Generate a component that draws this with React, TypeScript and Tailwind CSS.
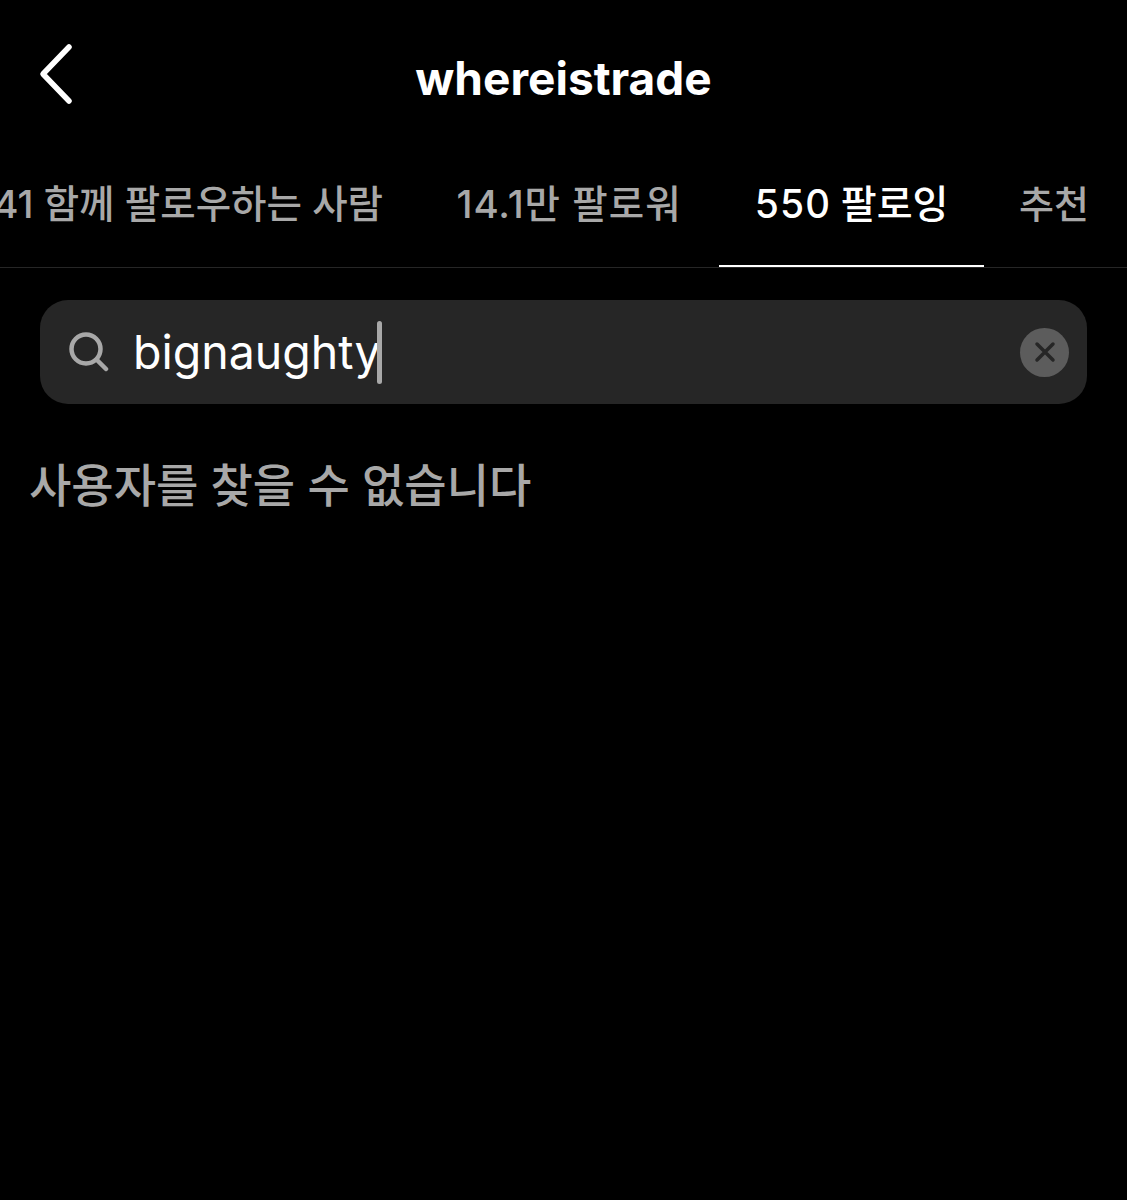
const FONT = "font-['Inter','Noto_Sans_CJK_KR',sans-serif]";

const TABS = [
  { label: "41 함께 팔로우하는 사람", active: false, size: "pr-[36px] text-[38.500px]" },
  { label: "14.1만 팔로워", active: false, size: "w-[300px] text-[38.500px] tracking-[1px]" },
  { label: "550 팔로잉", active: true, size: "w-[265px] text-[39px] tabular-nums" },
  { label: "추천", active: false, size: "w-[140px] text-[38px]" },
];

function BackIcon() {
  return (
    <svg width="36" height="62" viewBox="0 0 36 62" fill="none" className="block">
      <path d="M31 4 L5 31 L31 58" stroke="#fff" strokeWidth="5.500" strokeLinecap="round" strokeLinejoin="round" />
    </svg>
  );
}

function SearchIcon() {
  return (
    <svg width="40" height="40" viewBox="0 0 40 40" fill="none" className="block">
      <circle cx="17" cy="17" r="14.500" stroke="#a8a8a8" strokeWidth="4.500" />
      <path d="M27.500 27.500 L37 37" stroke="#a8a8a8" strokeWidth="4.500" strokeLinecap="round" />
    </svg>
  );
}

function ClearButton() {
  return (
    <div className="flex h-[49px] w-[49px] items-center justify-center rounded-full bg-[#5c5c5c]">
      <svg width="22" height="22" viewBox="0 0 22 22" fill="none" className="block">
        <path d="M3 3 L19 19 M19 3 L3 19" stroke="#262626" strokeWidth="3.500" strokeLinecap="round" />
      </svg>
    </div>
  );
}

export default function App() {
  return (
    <main className={`h-[1200px] w-full overflow-hidden bg-black ${FONT}`}>
      <header className="relative flex h-[155px] items-start justify-center pt-[50px]">
        <div className="absolute left-[38px] top-[43px]">
          <BackIcon />
        </div>
        <h1 className="text-[46px] leading-[56px] font-bold text-white">whereistrade</h1>
      </header>

      <nav className="flex h-[113px] justify-end overflow-hidden border-b border-[#262626] pr-[3px]">
        {TABS.map((tab) => (
          <div
            key={tab.label}
            className={`shrink-0 whitespace-nowrap border-b-2 pt-[23px] text-center leading-[52px] font-medium ${tab.size} ${
              tab.active ? "border-white text-white" : "border-transparent text-[#a8a8a8]"
            }`}
          >
            {tab.label}
          </div>
        ))}
      </nav>

      <div className="px-[40px] pt-[32px]">
        <div className="flex h-[104px] items-center rounded-[28px] bg-[#262626] pl-[29px] pr-[18px]">
          <SearchIcon />
          <div className="ml-[24px] flex flex-1 items-center">
            <span className="text-[46.500px] leading-[60px] text-white">bignaughty</span>
            <span className="-ml-[4px] h-[63px] w-[5px] rounded-full bg-[#a8a8a8]" />
          </div>
          <ClearButton />
        </div>
      </div>

      <p className="pl-[29px] pt-[50px] text-[46px] leading-[62px] font-medium text-[#a8a8a8]">
        사용자를 찾을 수 없습니다
      </p>
    </main>
  );
}
